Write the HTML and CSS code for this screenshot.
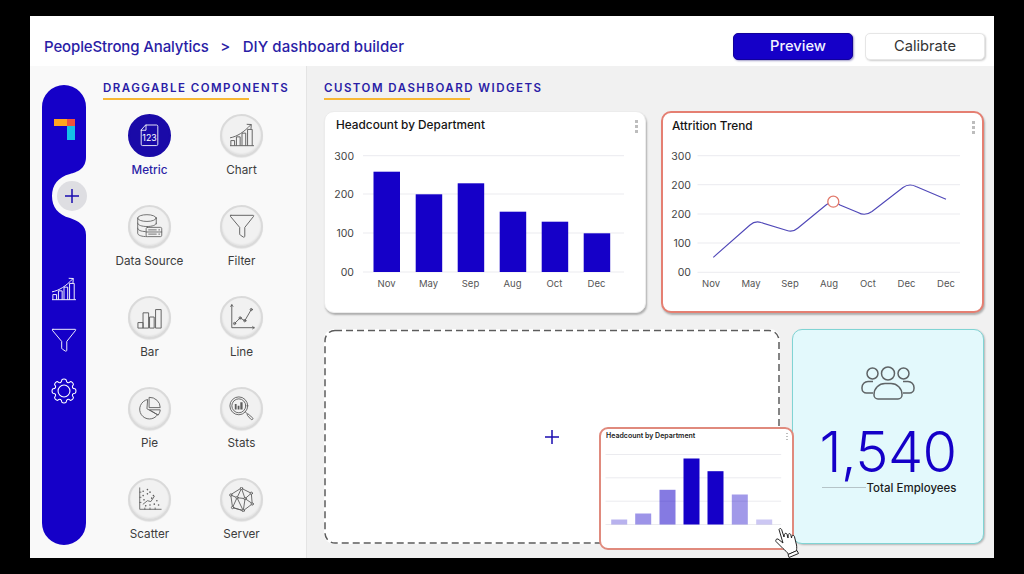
FILE: index.html
```html
<!DOCTYPE html>
<html lang="en">
<head>
<meta charset="utf-8">
<title>DIY dashboard builder</title>
<link rel="stylesheet" href="styles.css">
</head>
<body>
<svg class="defs" width="0" height="0" aria-hidden="true">
  <symbol id="i-chart" viewBox="0 0 28 28">
    <path d="M1.5 25.5h25M2 25v-5h4v5M8 25v-9h4v9M14 25V12h4v13M20 25V8h5v17"/>
    <path d="M1.5 17C9 15.5 16 11 23.5 3M19.5 2.5l4.5.2-.3 4.3"/>
  </symbol>
  <symbol id="i-funnel" viewBox="0 0 28 28">
    <path d="M2 2.5h24c.7 0 .9.6.5 1.100L17 15.500v9.500c0 .9-.9 1.300-1.600.9l-3.200-2.100c-.5-.3-.7-.8-.7-1.300v-7L1.500 3.600C1.100 3.100 1.300 2.500 2 2.500z"/>
  </symbol>
  <symbol id="i-tooth" viewBox="0 0 24 24" overflow="visible">
    <path d="M8.750 4.150C9.600 3.900 9.900 3.400 10 1.700 11 .7 13 .7 14 1.700c.1 1.700.4 2.200 1.250 2.450"/>
  </symbol>
  <symbol id="i-metric" viewBox="0 0 24 28">
    <path d="M8 2h12a1.500 1.500 0 0 1 1.500 1.500V24a1.500 1.500 0 0 1-1.500 1.500H4A1.500 1.500 0 0 1 2.500 24V8zM8 2v6H2.500"/>
  </symbol>
  <symbol id="i-db" viewBox="0 0 32 32">
    <ellipse cx="13" cy="6" rx="11" ry="4"/>
    <path d="M2 6v18c0 2.500 5 4 11 4M24 6v7M2 12c0 2.500 5 4 11 4s11-1.500 11-4M2 18c0 2.500 4 3.800 9 4"/>
    <rect x="12" y="17" width="18.500" height="11" rx="1.500" fill="#f1f1f1"/>
    <path d="M12 22.500h18.500M15 20h9M15 25h9M27 20h1M27 25h1"/>
  </symbol>
  <symbol id="i-bar" viewBox="0 0 28 28">
    <path d="M1 25.500V20h5.500v5.500zM6.500 25.500V9.500h6v16zM13.500 25.500V14h5v11.500zM20 25.500V6h6v19.500z"/>
  </symbol>
  <symbol id="i-line" viewBox="0 0 28 28">
    <path d="M3 1v24.500h24M3 1l-1.200 1.500M3 1l1.200 1.500M27 25.500l-1.500-1.200M27 25.500l-1.500 1.200"/>
    <path d="M6 21l6-6 5 3 7-12"/>
    <circle cx="6" cy="21" r="1.200"/><circle cx="12" cy="15" r="1.200"/><circle cx="17" cy="18" r="1.200"/><circle cx="24" cy="6" r="1.200"/>
  </symbol>
  <symbol id="i-pie" viewBox="0 0 28 28">
    <path d="M11.500 4a11 11 0 1 0 11.500 17L11.500 14.500z"/>
    <path d="M14 1.500a11.500 11.500 0 0 1 12 11.500H14z"/>
    <path d="M14.500 15.500h11.500c0 1.500-.8 3.800-2 5.500z"/>
  </symbol>
  <symbol id="i-stats" viewBox="0 0 28 28">
    <circle cx="11" cy="11" r="10"/><circle cx="11" cy="11" r="7.800"/>
    <path class="ico-fill" d="M6.500 9h2v6h-2zM9.700 11h2v4h-2zM12.700 7h2.500v8h-2.500z"/>
    <path d="M18.500 18l2.500 2.500M20.500 21.500c-.6-1 0-1.700 1-1.300l5 4.300c1 1.200-.5 2.800-1.700 1.800z"/>
  </symbol>
  <symbol id="i-scatter" viewBox="0 0 28 28">
    <path d="M2 1v25h25M2 6h1.500M2 12h1.500M2 18h1.500M8 26v-1.500M14 26v-1.500M20 26v-1.500"/>
    <path d="M6 20l5-4 4 1 4-6"/>
    <path class="ico-dots" d="M6 5h.01M11 3h.01M6 10h.01M11 8h.01M14 6h.01M18 10h.01M7 15h.01M22 16h.01M9 22h.01M14 21h.01M19 20h.01M24 21h.01M16 13h.01"/>
  </symbol>
  <symbol id="i-net" viewBox="0 0 28 28">
    <path d="M14 1.500L25 7l1 12-10 7.500L4 23 2 9zM14 1.500L9 12l9 1 7-6M2 9l7 3-5 11 12 3.500 2-13.500 8 5.500M9 12l7 14.500M14 1.500l4 11.500"/>
    <circle class="ico-node" cx="14" cy="1.500" r="1.300"/><circle class="ico-node" cx="25" cy="7" r="1.300"/><circle class="ico-node" cx="26" cy="19" r="1.300"/><circle class="ico-node" cx="16" cy="26.500" r="1.300"/><circle class="ico-node" cx="4" cy="23" r="1.300"/><circle class="ico-node" cx="2" cy="9" r="1.300"/><circle class="ico-node" cx="9" cy="12" r="1.300"/><circle class="ico-node" cx="18" cy="13" r="1.300"/>
  </symbol>
</svg>

<div class="app">
  <header class="topbar">
    <div class="crumbs"><span class="crumb-root">PeopleStrong Analytics</span><span class="sep">&gt;</span><span class="crumb-page">DIY dashboard builder</span></div>
    <div class="actions">
      <button class="btn btn-primary">Preview</button>
      <button class="btn btn-plain">Calibrate</button>
    </div>
  </header>

  <main class="main">
    <aside class="left">
      <nav class="rail">
        <svg class="rail-bg" width="44" height="460" viewBox="0 0 44 460"><path d="M0 22A22 22 0 0 1 44 22V72C44 84 35 87 28 89 16 92 10 100 10 111 10 122 16 130 28 133 36 136 44 140 44 150V438A22 22 0 0 1 0 438Z"/></svg>
        <div class="logo"><i class="logo-o"></i><i class="logo-r"></i><i class="logo-c"></i></div>
        <div class="rail-add"><svg width="14" height="14" viewBox="0 0 14 14"><path d="M7 0v14M0 7h14"/></svg></div>
        <svg class="ico rail-ico rail-ico-first" width="26" height="26"><use href="#i-chart"/></svg>
        <svg class="ico rail-ico" width="26" height="26"><use href="#i-funnel"/></svg>
        <svg class="ico rail-ico" width="26" height="26" viewBox="0 0 24 24">
          <g><use href="#i-tooth" width="24" height="24"/><use href="#i-tooth" width="24" height="24" transform="rotate(45 12 12)"/><use href="#i-tooth" width="24" height="24" transform="rotate(90 12 12)"/><use href="#i-tooth" width="24" height="24" transform="rotate(135 12 12)"/><use href="#i-tooth" width="24" height="24" transform="rotate(180 12 12)"/><use href="#i-tooth" width="24" height="24" transform="rotate(225 12 12)"/><use href="#i-tooth" width="24" height="24" transform="rotate(270 12 12)"/><use href="#i-tooth" width="24" height="24" transform="rotate(315 12 12)"/></g>
          <circle cx="12" cy="12" r="5.500"/>
        </svg>
      </nav>
      <section class="palette">
        <h2 class="heading">DRAGGABLE COMPONENTS</h2>
        <div class="rule rule-left"></div>
        <div class="palette-grid">
          <div class="comp comp-active">
            <div class="disc"><svg class="ico" width="21" height="25" viewBox="0 0 24 28"><use href="#i-metric" width="24" height="28"/><text class="metric-num" x="12" y="20.500">123</text></svg></div>
            <span>Metric</span>
          </div>
          <div class="comp"><div class="disc"><svg class="ico" width="26" height="26"><use href="#i-chart"/></svg></div><span>Chart</span></div>
          <div class="comp"><div class="disc"><svg class="ico" width="27" height="27"><use href="#i-db"/></svg></div><span>Data Source</span></div>
          <div class="comp"><div class="disc"><svg class="ico" width="26" height="26"><use href="#i-funnel"/></svg></div><span>Filter</span></div>
          <div class="comp"><div class="disc"><svg class="ico" width="26" height="26"><use href="#i-bar"/></svg></div><span>Bar</span></div>
          <div class="comp"><div class="disc"><svg class="ico" width="26" height="26"><use href="#i-line"/></svg></div><span>Line</span></div>
          <div class="comp"><div class="disc"><svg class="ico" width="25" height="25"><use href="#i-pie"/></svg></div><span>Pie</span></div>
          <div class="comp"><div class="disc"><svg class="ico" width="25" height="25"><use href="#i-stats"/></svg></div><span>Stats</span></div>
          <div class="comp"><div class="disc"><svg class="ico" width="24" height="24"><use href="#i-scatter"/></svg></div><span>Scatter</span></div>
          <div class="comp"><div class="disc"><svg class="ico" width="25" height="25"><use href="#i-net"/></svg></div><span>Server</span></div>
        </div>
      </section>
    </aside>

    <section class="work">
      <h2 class="heading">CUSTOM DASHBOARD WIDGETS</h2>
      <div class="rule rule-right"></div>
      <div class="row row-top">
        <article class="card">
          <div class="card-head"><h3>Headcount by Department</h3><span class="kebab"></span></div>
          <svg class="chart" width="320" height="168" viewBox="325 143 320 168">
            <g class="grid"><path d="M363 155.700H624M363 194H624M363 233H624M363 272H624"/></g>
            <g class="ylab"><text x="354" y="159.500">300</text><text x="354" y="198">200</text><text x="354" y="237">100</text><text x="354" y="276">00</text></g>
            <g class="bars">
              <rect x="373.500" y="171.700" width="26.500" height="100.300"/><rect x="415.700" y="194.300" width="26.500" height="77.700"/><rect x="457.700" y="183.300" width="26.500" height="88.700"/><rect x="499.700" y="211.700" width="26.500" height="60.300"/><rect x="541.700" y="221.700" width="26.500" height="50.300"/><rect x="583.700" y="233.300" width="26.500" height="38.700"/>
            </g>
            <g class="xlab"><text x="386.500" y="287">Nov</text><text x="428.500" y="287">May</text><text x="470.500" y="287">Sep</text><text x="512.500" y="287">Aug</text><text x="554.500" y="287">Oct</text><text x="596.500" y="287">Dec</text></g>
          </svg>
        </article>
        <article class="card card-coral">
          <div class="card-head"><h3>Attrition Trend</h3><span class="kebab"></span></div>
          <svg class="chart" width="320" height="168" viewBox="663 144 320 168">
            <g class="grid"><path d="M697.500 155.700H960M697.500 184.700H960M697.500 214H960M697.500 243H960M697.500 272.300H960"/></g>
            <g class="ylab"><text x="691" y="159.500">300</text><text x="691" y="188.500">200</text><text x="691" y="218">200</text><text x="691" y="247">100</text><text x="691" y="276">00</text></g>
            <path class="trend" d="M713.300 257.300L750 225Q755 220.500 761 222.500L787 230.500Q793 232.500 798 228L826 205Q833 199 840 205L858 212.500Q865 216.500 872 211.500L903 187.500Q909 183 916 186.500L946 199.300"/>
            <circle class="marker" cx="833.300" cy="201.700" r="5.500"/>
            <g class="xlab"><text x="711" y="287">Nov</text><text x="751" y="287">May</text><text x="790" y="287">Sep</text><text x="829" y="287">Aug</text><text x="868" y="287">Oct</text><text x="906.500" y="287">Dec</text><text x="946" y="287">Dec</text></g>
          </svg>
        </article>
      </div>
      <div class="row row-bottom">
        <div class="dropzone">
          <svg class="dash-frame" width="456" height="215" viewBox="0 0 456 215"><rect x="1" y="1.500" width="454" height="212.500" rx="10"/></svg>
          <svg class="drop-plus" width="14" height="14" viewBox="0 0 14 14"><path d="M7 0v14M0 7h14"/></svg>
          <article class="ghost">
            <div class="ghost-head"><h4>Headcount by Department</h4><span class="kebab kebab-small"></span></div>
            <svg class="chart" width="191" height="100" viewBox="600.500 448.500 191 100">
              <g class="grid"><path d="M605 454H780.700M605 477.300H780.700M605 500.700H780.700M605 524H780.700"/></g>
              <rect class="gb o1" x="610.700" y="519" width="16" height="5"/><rect class="gb o2" x="634.700" y="513" width="16" height="11"/><rect class="gb o3" x="659" y="489.300" width="16" height="34.700"/><rect class="gb" x="683" y="458" width="16" height="66"/><rect class="gb" x="707" y="470.700" width="16" height="53.300"/><rect class="gb o4" x="731.300" y="494" width="16" height="30"/><rect class="gb o5" x="755.700" y="519" width="16" height="5"/>
            </svg>
          </article>
          <svg class="hand" width="24" height="30" viewBox="0 0 24 30">
            <path d="M4 1.500C4.600.2 6 .2 6.600 1.500L9 9l.4-2.800C10 5 11.600 5 12 6.300L13 10l.2-3.600c.6-1.100 2.100-1 2.600.2l.7 3.400.4-2c.6-1 2.100-.8 2.500.4L21.500 17c.5 2.500 0 4.500 0 6l-8 3.500c-1-2.500-3-3.500-5.500-6l-7-7c-.8-1.500.5-3 2-2.500l5 4z"/>
            <path d="M13 26.500l9-4 1.500 3L14 29.500z"/>
          </svg>
        </div>
        <article class="stat">
          <svg class="people" width="56" height="36" viewBox="0 0 56 36">
            <circle cx="28" cy="8.500" r="6.500"/><circle cx="12.500" cy="8.500" r="5.500"/><circle cx="43.500" cy="8.500" r="5.500"/>
            <path d="M25 18.500h6a11 11 0 0 1 11 11v.5a4 4 0 0 1-4 4H18a4 4 0 0 1-4-4v-.5a11 11 0 0 1 11-11z"/>
            <path d="M13 16.500H8a6 6 0 0 0-6 6v1a4.500 4.500 0 0 0 4.500 4.500H13M43 16.500h5a6 6 0 0 1 6 6v1a4.500 4.500 0 0 1-4.500 4.500H43"/>
          </svg>
          <div class="stat-num">1,540</div>
          <div class="stat-label"><i></i><span>Total Employees</span></div>
        </article>
      </div>
    </section>
  </main>
</div>
</body>
</html>
```

FILE: styles.css
```css
* { box-sizing: border-box; }
html, body { margin: 0; height: 100%; }
body {
  background: #000;
  padding: 16px 30px;
  font-family: Inter, "Liberation Sans", sans-serif;
  overflow: hidden;
}
.defs { position: absolute; }
.app {
  width: 964px;
  height: 542px;
  background: #fff;
  display: flex;
  flex-direction: column;
}
.topbar {
  height: 50px;
  flex: none;
  display: flex;
  align-items: center;
  justify-content: space-between;
  padding: 10px 9px 0 14px;
}
.crumbs {
  display: flex;
  font-size: 15px;
  font-weight: 500;
  color: #2a1da6;
}
.crumb-root { letter-spacing: -.13px; }
.crumb-page { letter-spacing: .08px; }
.sep { margin: 0 12.500px 0 11.500px; }
.actions { display: flex; gap: 12px; }
.btn {
  width: 120px;
  height: 27px;
  border-radius: 5px;
  font-family: inherit;
  font-size: 14.700px;
  padding: 0;
}
.btn-primary {
  background: #1500c8;
  color: #f2f2ff;
  font-weight: 500;
  border: 1px solid #12019a;
  box-shadow: 1px 1px 2px rgba(20, 10, 120, .4);
  padding-left: 10px;
}
.btn-plain {
  background: #fff;
  color: #333;
  border: 1px solid #e6e6e6;
  box-shadow: 1px 1px 2px rgba(0, 0, 0, .2);
}
.main { flex: 1; display: flex; min-height: 0; }
.left {
  width: 277px;
  flex: none;
  background: #f9f9f9;
  border-right: 1px solid #e4e4e4;
  display: flex;
  padding-left: 12px;
}
.rail {
  position: relative;
  width: 44px;
  height: 460px;
  margin-top: 19px;
  flex: none;
  display: flex;
  flex-direction: column;
  align-items: center;
  color: #fff;
}
.rail-bg { position: absolute; left: 0; top: 0; }
.rail-bg path { fill: #1500c8; }
.logo {
  position: relative;
  width: 21px;
  height: 21px;
  margin-top: 34px;
  flex: none;
  display: grid;
  grid-template-columns: 13px 8px;
  grid-template-rows: 7px 14px;
}
.logo-o { background: #ffa51f; }
.logo-r { background: #f0523d; }
.logo-c { background: #14c0e8; grid-column: 2; }
.rail-add {
  position: relative;
  width: 30px;
  height: 30px;
  margin: 41px 0 0 16px;
  flex: none;
  border-radius: 50%;
  background: #dedee2;
  display: flex;
  align-items: center;
  justify-content: center;
}
.rail-add path, .drop-plus path { stroke: #1a0cb0; stroke-width: 1.500; fill: none; }
.ico { fill: none; stroke: currentColor; stroke-width: 1; stroke-linejoin: round; stroke-linecap: round; overflow: visible; }
.ico-fill { fill: currentColor; stroke: none; }
.ico-dots { stroke-width: 1.900; }
.ico-node { fill: #f1f1f1; }
.rail-ico { position: relative; flex: none; margin-top: 25px; }
.rail-ico-first { margin-top: 65px; }
.palette { padding: 15px 0 0 17px; flex: 1; }
.heading {
  margin: 0;
  font-size: 11.500px;
  line-height: 14px;
  font-weight: 600;
  letter-spacing: 1.480px;
  color: #2a1da6;
  white-space: nowrap;
}
.rule { height: 2px; background: #f7b733; margin-top: 3px; }
.rule-left { width: 146px; }
.rule-right { width: 146px; }
.palette-grid {
  display: grid;
  grid-template-columns: 92px 92px;
  grid-auto-rows: 91px;
  margin: 13.500px 0 0 .5px;
}
.comp {
  display: flex;
  flex-direction: column;
  align-items: center;
  font-size: 11.700px;
  line-height: 16px;
  color: #3d3d3d;
}
.comp span { margin-top: 5px; white-space: nowrap; }
.disc {
  width: 43px;
  height: 43px;
  border-radius: 50%;
  border: 2px solid #dadada;
  background: #f1f1f1;
  box-shadow: inset 0 -1px 2px rgba(0, 0, 0, .08), 0 1px 1px rgba(0, 0, 0, .08);
  display: flex;
  align-items: center;
  justify-content: center;
  color: #5c5c5c;
}
.comp-active { color: #2a1da6; font-weight: 500; }
.comp-active .disc { background: #1a0aa8; border-color: #1a0aa8; color: #fff; box-shadow: none; }
.metric-num {
  font-size: 10px;
  font-weight: 400;
  fill: #fff;
  stroke: none;
  text-anchor: middle;
}
.work {
  flex: 1;
  min-width: 0;
  background: #f1f1f1;
  padding: 15px 10px 0 17px;
}
.row { display: flex; }
.row-top { gap: 15px; margin-top: 11px; height: 202px; }
.row-bottom { gap: 12px; margin-top: 16px; height: 215px; }
.card {
  width: 322px;
  background: #fff;
  border: 1px solid #ececec;
  border-radius: 10px;
  box-shadow: 1px 2px 2px rgba(0, 0, 0, .28);
  overflow: hidden;
}
.card-coral { width: 323px; border: 2px solid #e57f72; }
.card-coral .card-head { padding-left: 9px; }
.card-head {
  height: 31px;
  padding: 5.500px 7.500px 0 11px;
  display: flex;
  justify-content: space-between;
}
.card-head h3 {
  margin: 0;
  font-size: 11.800px;
  line-height: 15px;
  font-weight: 500;
  color: #141414;
}
.kebab {
  width: 3px;
  height: 15px;
  margin-top: 1px;
  background: radial-gradient(circle, #bdbdbd 1.500px, transparent 1.600px) 0 0 / 3px 5px repeat-y;
}
.chart { display: block; }
.grid path { stroke: #ebebef; stroke-width: 1; fill: none; }
.ylab text { font-size: 10.500px; fill: #444; text-anchor: end; }
.xlab text { font-size: 9.500px; fill: #555; text-anchor: middle; }
.bars rect { fill: #1500c8; }
.trend { fill: none; stroke: #5048b8; stroke-width: 1.100; }
.marker { fill: #fff; stroke: #e2796b; stroke-width: 1.300; }
.dropzone {
  position: relative;
  width: 456px;
  border-radius: 10px;
  background: #fff;
  display: flex;
  align-items: center;
  justify-content: center;
}
.dash-frame { position: absolute; left: 0; top: 0; }
.dash-frame rect { fill: none; stroke: #5c5c5c; stroke-width: 1.500; stroke-dasharray: 7 4; }
.drop-plus { display: block; position: relative; }
.ghost {
  position: absolute;
  left: 274.500px;
  top: 97.500px;
  width: 195px;
  height: 123px;
  background: #fff;
  border: 2px solid #e08a7d;
  border-radius: 9px;
  z-index: 2;
  overflow: hidden;
}
.ghost-head {
  height: 20px;
  padding: 2.500px 4px 0 5.500px;
  display: flex;
  justify-content: space-between;
}
.ghost-head h4 {
  margin: 0;
  font-size: 7px;
  line-height: 10px;
  font-weight: 600;
  color: #222;
}
.kebab-small {
  width: 2px;
  height: 8px;
  background: radial-gradient(circle, #bdbdbd 1px, transparent 1.100px) 0 0 / 2px 3px repeat-y;
}
.gb { fill: #1500c8; }
.o1 { opacity: .3; }
.o2 { opacity: .42; }
.o3 { opacity: .52; }
.o4 { opacity: .4; }
.o5 { opacity: .22; }
.hand {
  position: absolute;
  left: 451px;
  top: 199px;
  z-index: 3;
  overflow: visible;
}
.hand path { fill: #fff; stroke: #222; stroke-width: 1; stroke-linejoin: round; }
.stat {
  width: 192px;
  background: #e3f9fc;
  border: 1.500px solid #80d4d4;
  border-radius: 10px;
  box-shadow: 1px 1px 2px rgba(0, 0, 0, .25);
  display: flex;
  flex-direction: column;
  align-items: center;
  padding-top: 34.500px;
  color: #5a5f62;
}
.people { fill: none; stroke: #5f6466; stroke-width: 1.500; display: block; margin-left: 0; flex: none; }
.stat-num {
  margin-top: 27px;
  font-size: 56px;
  line-height: 48px;
  font-weight: 300;
  color: #1500c8;
  letter-spacing: -.6px;
}
.stat-label {
  display: flex;
  align-items: center;
  align-self: flex-start;
  margin: 5px 0 0 28.500px;
  font-size: 11.500px;
  line-height: 14px;
  font-weight: 500;
  color: #1c1c1c;
  white-space: nowrap;
}
.stat-label i { width: 44px; height: 1px; background: #b5c4c8; margin-right: 1px; }
```
